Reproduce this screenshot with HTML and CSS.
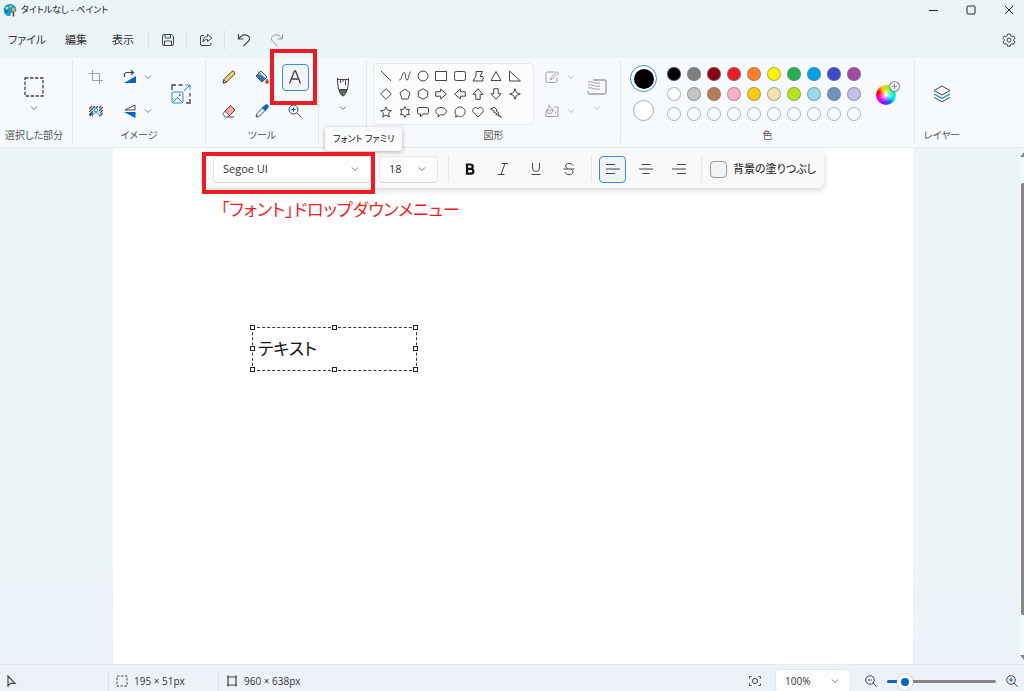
FILE: index.html
```html
<!DOCTYPE html>
<html lang="ja">
<head>
<meta charset="utf-8">
<title>タイトルなし - ペイント</title>
<link rel="stylesheet" href="styles.css">
</head>
<body>
<svg class="defs" aria-hidden="true">
  <symbol id="chev" viewBox="0 0 8 8"><path d="M1 2.500 4 5.500 7 2.500"/></symbol>
</svg>
<div class="app">
  <header class="titlebar">
    <svg class="logo" viewBox="0 0 14 14"><path d="M7 1C3 1 .5 4 .7 7.500 1 11 4 13.500 6.500 13c1.500-.4.8-2 1.500-3 1-1.200 5 0 5.300-3C13.500 3.500 10.500 1 7 1z" fill="#1b9bd8"/><circle cx="4" cy="5" r="1.300" fill="#ffd04a"/><circle cx="7.500" cy="3.500" r="1.200" fill="#8fe06a"/><circle cx="3.500" cy="8.500" r="1.200" fill="#0b5fa8"/><path d="M10.500 7v6.500" stroke="#5d4632" stroke-width="1.500"/><path d="M9 5h3v3.500H9z" fill="#f0a23c"/></svg>
    <span class="title">タイトルなし - ペイント</span>
    <button class="win" aria-label="最小化"><svg class="ic" viewBox="0 0 10 10"><path d="M1 5.500h9"/></svg></button>
    <button class="win" aria-label="最大化"><svg class="ic" viewBox="0 0 10 10"><rect x="1" y="1" width="8" height="8" rx=".8"/></svg></button>
    <button class="win" aria-label="閉じる"><svg class="ic" viewBox="0 0 10 10"><path d="m1 1 8 8M9 1 1 9"/></svg></button>
  </header>
  <nav class="menubar">
    <button class="menu file">ファイル</button>
    <button class="menu edit">編集</button>
    <button class="menu view">表示</button>
    <i class="sep"></i>
    <button class="quick" aria-label="保存"><svg class="ic" viewBox="0 0 14 14"><path d="M1.500 3A1.500 1.500 0 0 1 3 1.500h7.500l2 2V11A1.500 1.500 0 0 1 11 12.500H3A1.500 1.500 0 0 1 1.500 11zM4 1.500V5h5.500V1.500M3.500 12.500V8h7v4.500"/></svg></button>
    <i class="sep"></i>
    <button class="quick" aria-label="共有"><svg class="ic" viewBox="0 0 14 14"><path d="M5 2.500H3A1.500 1.500 0 0 0 1.500 4v7A1.500 1.500 0 0 0 3 12.500h7.500A1.500 1.500 0 0 0 12 11v-1M8.500 1.500 13 5 8.500 8.500v-2C6 6.500 5 7.500 4 9c0-3 1.500-5.300 4.500-5.500z"/></svg></button>
    <i class="sep"></i>
    <button class="quick" aria-label="元に戻す"><svg class="ic" viewBox="0 0 14 14"><path d="M1.500 1v5h5M1.700 6C4 2.500 7.500 1 10.500 2.500c2.500 1.300 2.500 4 1 5.700L6.500 13" stroke-width="1.200"/></svg></button>
    <button class="quick off" aria-label="やり直し"><svg class="ic" viewBox="0 0 14 14"><path d="M12.500 1v5h-5M12.300 6C10 2.500 6.500 1 3.500 2.500 1 3.800 1 6.500 2.500 8.200L7.500 13"/></svg></button>
    <button class="quick gear" aria-label="設定"><svg class="ic" viewBox="0 0 14 14"><path d="m5.700 1-.4 1.800-1.300.7L2.300 3 1 5.200 2.300 6.500v1.200L1 9l1.300 2.200 1.700-.5 1.300.7.4 1.800h2.600l.4-1.800 1.300-.7 1.700.5L13 9l-1.300-1.300V6.500L13 5.200 11.700 3l-1.700.5-1.300-.7L8.300 1z"/><circle cx="7" cy="7.100" r="2"/></svg></button>
  </nav>

  <section class="ribbon">
    <div class="group g-select">
      <div class="body stack">
        <button aria-label="選択"><svg class="ic i20" viewBox="0 0 20 20"><rect x="1" y="1" width="18" height="18" stroke-dasharray="3.500 1.500" stroke-width="1.300"/></svg></button>
        <svg class="chev"><use href="#chev"/></svg>
      </div>
      <h2>選択した部分</h2>
    </div>
    <div class="group g-image">
      <div class="body image-grid">
        <button class="off" aria-label="トリミング"><svg class="ic" viewBox="0 0 14 14"><path d="M3.500 0v10.500H14M0 3.500h10.500V14"/></svg></button>
        <button class="pair" aria-label="回転"><svg class="ic" viewBox="0 0 14 14"><path d="M13 6v7H1z" fill="#0b62c0" stroke="none"/><path d="M2 7C.5 5 1.500 2.500 4 2.500h6M8 .3l2.500 2.200L8 4.800" stroke-width="1.200"/></svg><svg class="chev"><use href="#chev"/></svg></button>
        <button class="big" aria-label="サイズ変更"><svg class="ic i20" viewBox="0 0 20 20"><path d="M1 6V1h4M7.500 1h4M19 9v3.500M19 15v4h-4" stroke-width="1.300"/><path d="m13 7 6-6M14.500 1H19v4.500" stroke="#2b7fd0"/><rect x="1" y="8" width="11" height="11" rx="1.500" stroke="#2b7fd0"/><path d="m2 18 4.500-4.500L11 18" stroke="#2b7fd0"/><circle cx="8.700" cy="11" r=".8" stroke="#2b7fd0"/></svg></button>
        <button aria-label="背景の削除"><svg class="ic" viewBox="0 0 14 14"><path d="m0 5 3-3M0 8l6-6M0 11l4-4M7 4l2-2M1 12l3-3M10 4l2-2M10 7l4-4M11 9l3-3M11 12l3-3" stroke-width="1.200"/><circle cx="7" cy="6" r="1.800" stroke="#2b7fd0"/><path d="M3.500 12.500c.3-5 6.700-5 7 0" stroke="#2b7fd0"/></svg></button>
        <button class="pair" aria-label="反転"><svg class="ic" viewBox="0 0 14 14"><path d="M12 1v5H2z"/><path d="M12.500 8v6L1 8z" fill="#0b62c0" stroke="none"/></svg><svg class="chev"><use href="#chev"/></svg></button>
      </div>
      <h2>イメージ</h2>
    </div>
    <div class="group g-tools">
      <div class="body tools-grid">
        <button aria-label="鉛筆"><svg class="ic" viewBox="0 0 14 14"><path d="m1 13 .8-3.500L10 1.300c1.500-1 3.500 1 2.700 2.700L4.500 12.200z" fill="#f6cf62"/><path d="m1 13 .8-3.300 2.500 2.500z" fill="#fff"/></svg></button>
        <button aria-label="塗りつぶし"><svg class="ic" viewBox="0 0 14 14"><path d="m1 6 5-5 6 6-5 5z" fill="#fff"/><path d="m1.500 6 2-2 7 4L7 11.500z" fill="#1677cc" stroke="none"/><path d="M3 1.500 8 6.500"/><path d="M12 9c-1 1.500-1.500 2.200-1.500 3a1.500 1.500 0 0 0 3 0c0-.8-.5-1.500-1.500-3z" fill="#d9471c" stroke="#a33616" stroke-width=".6"/></svg></button>
        <button class="selected" aria-label="テキスト"><svg class="ic" viewBox="0 0 14 14"><path d="m1.500 13.500 5-12.500h1l5 12.500M3.300 9h7.400" stroke-width="1.300"/></svg></button>
        <button aria-label="消しゴム"><svg class="ic" viewBox="0 0 14 14"><path d="M1 9.500 8.500 1.500 13 6l-7 7H3.500L1 10.500z" fill="#fff"/><path d="M3 7.300 8.500 1.500 13 6 7.500 11.700z" fill="#f8a9a9"/><path d="M6 13h6"/></svg></button>
        <button aria-label="色の選択"><svg class="ic" viewBox="0 0 14 14"><path d="M7.500 4 2 9.500 1 13l3.500-1L10 6.500z" fill="#eef6fc"/><path d="m6.500 3 1.500-.3L10.500.5c2-1 4 1 3 3L11.300 6l-.3 1.500z" fill="#0b62c0" stroke="none"/></svg></button>
        <button aria-label="拡大鏡"><svg class="ic" viewBox="0 0 14 14"><circle cx="5.500" cy="5.500" r="4.500"/><path d="m9 9 4.500 4.500"/><path d="M5.500 3.200v4.600M3.200 5.500h4.600" stroke="#0b62c0"/></svg></button>
      </div>
      <h2>ツール</h2>
    </div>
    <div class="group g-brush">
      <div class="body stack">
        <button aria-label="ブラシ"><svg class="ic i20" viewBox="0 0 20 20"><path d="M4.500 1v4l1 7.500h9l1-7.500V1M4.500 2.500h11M7.500 2.500V6M10 2.500v2.500M12.500 2.500V8"/><path d="M6 13h8l-1 3-2.500 3h-1L7 16z" fill="#666"/></svg></button>
        <svg class="chev"><use href="#chev"/></svg>
      </div>
    </div>
    <div class="group g-shapes">
      <div class="body shapes-row">
        <div class="gallery">
          <button aria-label="直線"><svg class="ic i12" viewBox="0 0 12 12"><path d="m1 1 10 10"/></svg></button>
          <button aria-label="曲線"><svg class="ic i12" viewBox="0 0 12 12"><path d="M.3 10C3 10 3 2.500 5 2.500S6 10 8 10s1.500-7.500 4-8.500"/></svg></button>
          <button aria-label="楕円"><svg class="ic i12" viewBox="0 0 12 12"><circle cx="6" cy="6" r="5"/></svg></button>
          <button aria-label="四角形"><svg class="ic i12" viewBox="0 0 12 12"><path d="M.5 1.500h11v9H.5z"/></svg></button>
          <button aria-label="角丸四角形"><svg class="ic i12" viewBox="0 0 12 12"><rect x=".5" y="1.500" width="11" height="9" rx="1.800"/></svg></button>
          <button aria-label="多角形"><svg class="ic i12" viewBox="0 0 12 12"><path d="M4 1.500h6.500L8 6.500h3V11H1L4 6z"/></svg></button>
          <button aria-label="三角形"><svg class="ic i12" viewBox="0 0 12 12"><path d="m6 1.500 5 9H1z"/></svg></button>
          <button aria-label="直角三角形"><svg class="ic i12" viewBox="0 0 12 12"><path d="M.5 1v10h11z"/></svg></button>
          <button aria-label="ひし形"><svg class="ic i12" viewBox="0 0 12 12"><path d="m6 .7 5.300 5.300L6 11.300.7 6z"/></svg></button>
          <button aria-label="五角形"><svg class="ic i12" viewBox="0 0 12 12"><path d="m6 1 5 3.800L9 11H3L1 4.800z"/></svg></button>
          <button aria-label="六角形"><svg class="ic i12" viewBox="0 0 12 12"><path d="m6 .8 4.700 2.500v5.400L6 11.200 1.300 8.700V3.300z"/></svg></button>
          <button aria-label="右矢印"><svg class="ic i12" viewBox="0 0 12 12"><path d="M.7 3.800h5V1l5.600 5-5.600 5V8.200h-5z"/></svg></button>
          <button aria-label="左矢印"><svg class="ic i12" viewBox="0 0 12 12"><path d="M11.300 3.800h-5V1L.7 6l5.600 5V8.200h5z"/></svg></button>
          <button aria-label="上矢印"><svg class="ic i12" viewBox="0 0 12 12"><path d="M3.800 11.300v-5H1L6 .7l5 5.600H8.200v5z"/></svg></button>
          <button aria-label="下矢印"><svg class="ic i12" viewBox="0 0 12 12"><path d="M3.800.7v5H1l5 5.600 5-5.600H8.200v-5z"/></svg></button>
          <button aria-label="四方星"><svg class="ic i12" viewBox="0 0 12 12"><path d="m6 .7 1.400 3.900L11.300 6 7.400 7.400 6 11.300 4.600 7.400.7 6l3.900-1.400z"/></svg></button>
          <button aria-label="五方星"><svg class="ic i12" viewBox="0 0 12 12"><path d="m6 .8 1.500 3.400 3.800.4-2.800 2.500.8 3.900L6 9l-3.300 2 .8-3.900L.7 4.600l3.800-.4z"/></svg></button>
          <button aria-label="六方星"><svg class="ic i12" viewBox="0 0 12 12"><path d="m6 .7 1.500 2.700h3.300L9.200 6l1.600 2.600H7.500L6 11.300 4.500 8.600H1.200L2.800 6 1.200 3.400h3.300z"/></svg></button>
          <button aria-label="角丸吹き出し"><svg class="ic i12" viewBox="0 0 12 12"><path d="M2 1.500h8A1.500 1.500 0 0 1 11.500 3v3.500A1.500 1.500 0 0 1 10 8H6l-2.500 3V8H2A1.500 1.500 0 0 1 .5 6.500V3A1.500 1.500 0 0 1 2 1.500z"/></svg></button>
          <button aria-label="楕円吹き出し"><svg class="ic i12" viewBox="0 0 12 12"><path d="M3 11 3.500 8.500C-1 7 0 1.500 6 1.500s7.500 6 2 7.300c-1 .2-2 .2-2.500 0z"/></svg></button>
          <button aria-label="円形吹き出し"><svg class="ic i12" viewBox="0 0 12 12"><path d="M1.500 11 2.200 9C-.5 5 2 1 6 1s6.500 4 4.500 7-4.500 3-6 2z"/></svg></button>
          <button aria-label="ハート"><svg class="ic i12" viewBox="0 0 12 12"><path d="M6 11 1.200 6C-.8 3.500 3.500-.8 6 3c2.500-3.800 6.800.5 4.800 3z"/></svg></button>
          <button aria-label="稲妻"><svg class="ic i12" viewBox="0 0 12 12"><path d="m.7 3 3.500-2L7 4.200l-1 .5L8.800 7l-1 .5 3.500 3.800-5.500-3 1-.7L3.500 6l1-.7z"/></svg></button>
        </div>
        <div class="shape-opts">
          <button class="pair off" aria-label="枠線"><svg class="ic" viewBox="0 0 14 14"><path d="M10 2H2.500A1.500 1.500 0 0 0 1 3.500V11A1.500 1.500 0 0 0 2.500 12.500h8L12 11V8M5.500 10l.7-2.500L12 1.500l1.500 1.500-6 6z"/></svg><svg class="chev"><use href="#chev"/></svg></button>
          <button class="pair off" aria-label="塗りつぶし"><svg class="ic" viewBox="0 0 14 14"><path d="M9 3h4v9.500H1V7M1.500 6 5 2.500 8.500 6 6 9.500H3.500zM4 .5v3M1.500 6h7M10.500 7.500v2"/></svg><svg class="chev"><use href="#chev"/></svg></button>
        </div>
        <div class="stack">
          <button class="off" aria-label="サイズ"><svg class="ic i20" viewBox="0 0 20 20"><path d="M6 3h11.500A1.500 1.500 0 0 1 19 4.500v11a1.500 1.500 0 0 1-1.500 1.500h-15A1.500 1.500 0 0 1 1 15.500V14" stroke-width="1.300"/><path d="M1 5c4-1 6 2 12 1M1 8c4-1 6 2 12 1M1 11c4-1 6 2 12 1"/></svg></button>
          <svg class="chev off"><use href="#chev"/></svg>
        </div>
      </div>
      <h2>図形</h2>
    </div>
    <div class="group g-colors">
      <div class="body colors-row">
        <div class="current">
          <button class="color-one" aria-label="色 1"><i></i></button>
          <button class="color-two" aria-label="色 2"></button>
        </div>
        <div class="palette">
          <button style="background:#000"></button><button style="background:#7f7f7f"></button><button style="background:#880015"></button><button style="background:#ed1c24"></button><button style="background:#ff7f27"></button><button style="background:#fff200"></button><button style="background:#22b14c"></button><button style="background:#00a2e8"></button><button style="background:#3f48cc"></button><button style="background:#a349a4"></button>
          <button style="background:#fff"></button><button style="background:#c3c3c3"></button><button style="background:#b97a57"></button><button style="background:#ffaec9"></button><button style="background:#ffc90e"></button><button style="background:#efe4b0"></button><button style="background:#b5e61d"></button><button style="background:#99d9ea"></button><button style="background:#7092be"></button><button style="background:#c8bfe7"></button>
          <button></button><button></button><button></button><button></button><button></button><button></button><button></button><button></button><button></button><button></button>
        </div>
        <button class="wheel" aria-label="色の編集"><svg class="ic plus" viewBox="0 0 10 10"><circle cx="5" cy="5" r="4.500" fill="#f7fafd"/><path d="M5 2.500v5M2.500 5h5"/></svg></button>
      </div>
      <h2>色</h2>
    </div>
    <div class="group g-layers">
      <div class="body layers">
        <button aria-label="レイヤー"><svg class="ic i20" viewBox="0 0 20 20"><path d="m10 2 8 4.500-8 4.500-8-4.500z"/><path d="m2 10 8 4.300L18 10" stroke="#2b7fd0" stroke-width="1.300"/><path d="m2 13.300 8 4.500 8-4.500"/></svg></button>
      </div>
      <h2>レイヤー</h2>
    </div>
  </section>

  <main class="workspace">
    <div class="canvas">
      <div class="textbox">テキスト
        <i class="h nw"></i><i class="h n"></i><i class="h ne"></i><i class="h w"></i><i class="h e"></i><i class="h sw"></i><i class="h s"></i><i class="h se"></i>
      </div>
      <p class="callout">「フォント」ドロップダウンメニュー</p>
    </div>
    <div class="scroll"><i class="up"></i><i class="thumb"></i><i class="down"></i></div>
    <div class="textbar">
      <span class="pick family"><select aria-label="フォント ファミリ"><option>Segoe UI</option></select><svg class="chev"><use href="#chev"/></svg></span>
      <span class="pick size"><select aria-label="フォント サイズ"><option>18</option></select><svg class="chev"><use href="#chev"/></svg></span>
      <i class="sep"></i>
      <div class="styles">
        <button aria-label="太字"><svg class="ic" viewBox="0 0 14 14"><path d="M4 2.500h3.500a2.200 2.200 0 0 1 0 4.400H4zM4 6.900h4a2.400 2.400 0 0 1 0 4.800H4z" stroke="#111" stroke-width="2.200"/></svg></button>
        <button aria-label="斜体"><svg class="ic" viewBox="0 0 14 14"><path d="M5.500 1.500H12M2 12.500h6.500M9 1.500l-4 11"/></svg></button>
        <button aria-label="下線"><svg class="ic" viewBox="0 0 14 14"><path d="M3.500 1v5a3.500 3.500 0 0 0 7 0V1M2.500 12.500h9"/></svg></button>
        <button aria-label="取り消し線"><svg class="ic" viewBox="0 0 14 14"><path d="M11 3.500C10 .8 3.500.8 3.500 4c0 1.500 1.500 2.200 3 3M1.500 7h11M9.500 7.500c3 2 1.500 5.200-2.500 5.200-2 0-3.500-1-4-2.500"/></svg></button>
      </div>
      <i class="sep"></i>
      <div class="styles">
        <button class="selected" aria-label="左揃え"><svg class="ic" viewBox="0 0 14 14"><path d="M0 2.500h9M0 7h14M0 11.500h9"/></svg></button>
        <button aria-label="中央揃え"><svg class="ic" viewBox="0 0 14 14"><path d="M2.500 2.500h9M0 7h14M3.500 11.500h7"/></svg></button>
        <button aria-label="右揃え"><svg class="ic" viewBox="0 0 14 14"><path d="M5 2.500h9M0 7h14M5 11.500h9"/></svg></button>
      </div>
      <i class="sep"></i>
      <label class="fill"><input type="checkbox">背景の塗りつぶし</label>
    </div>
  </main>

  <footer class="status">
    <span class="cell pointer"><svg class="ic i12" viewBox="0 0 12 12"><path d="M3 1v10l2.500-2.700H10z" stroke-width="1.200"/></svg></span>
    <span class="cell sel"><svg class="ic i12" viewBox="0 0 12 12"><rect x="1" y="1" width="10" height="10" stroke-dasharray="2.500 1.500"/></svg>195 × 51px</span>
    <span class="cell"><svg class="ic i12" viewBox="0 0 12 12"><path d="M2 .5v11M10 .5v11M1 2h10M1 10h10" stroke-width="1.200"/></svg>960 × 638px</span>
    <button class="fit" aria-label="ウィンドウに合わせる"><svg class="ic i12" viewBox="0 0 12 12"><path d="M.5 3.500v-2h2M9.500 1.500h2v2M11.500 8.500v2h-2M2.500 10.500h-2v-2"/><circle cx="6" cy="6" r="2.500"/></svg></button>
    <span class="pick zoom"><select aria-label="ズーム"><option>100%</option></select><svg class="chev"><use href="#chev"/></svg></span>
    <button aria-label="縮小"><svg class="ic i12" viewBox="0 0 12 12"><circle cx="5" cy="5" r="4.300"/><path d="m8 8 3.700 3.700"/><path d="M3 5h4" stroke="#0b62c0"/></svg></button>
    <input class="slider" type="range" min="0" max="100" value="11" aria-label="ズーム倍率">
    <button aria-label="拡大"><svg class="ic i12" viewBox="0 0 12 12"><circle cx="5" cy="5" r="4.300"/><path d="m8 8 3.700 3.700"/><path d="M3 5h4M5 3v4" stroke="#0b62c0"/></svg></button>
  </footer>

  <div class="tooltip" role="tooltip">フォント ファミリ</div>
  <div class="mark mark-tool"></div>
  <div class="mark mark-font"></div>
</div>
</body>
</html>
```
FILE: styles.css
```css
* { box-sizing: border-box; }
body {
  margin: 0;
  font: 10px/14px "Open Sans", "Noto Sans CJK JP", sans-serif;
  font-feature-settings: "palt";
  color: #333;
}
button {
  display: flex; align-items: center; justify-content: center;
  margin: 0; padding: 0; border: 0; background: none;
  font: inherit; color: inherit;
}
h2 { margin: 0; font: inherit; text-align: center; color: #555; }
.defs { position: absolute; width: 0; height: 0; }
.ic { width: 14px; height: 14px; fill: none; stroke: #444; stroke-width: 1; flex: none; }
.i20 { width: 20px; height: 20px; }
.i12 { width: 12px; height: 12px; }
.chev { width: 8px; height: 8px; fill: none; stroke: #777; flex: none; }
.off { opacity: .5; }
.sep { width: 1px; background: #dfe5ea; }

.app {
  position: relative; display: flex; flex-direction: column;
  height: 100vh; overflow: hidden; background: #ebf4f7;
}

.titlebar { display: flex; align-items: center; gap: 8px; height: 20px; padding-left: 3px; }
.logo { width: 14px; height: 14px; }
.title { flex: 1; margin-left: -4px; font-size: 9px; color: #111; }
.win { width: 30px; height: 20px; }
.win .ic { width: 10px; height: 10px; stroke: #222; }

.menubar { display: flex; align-items: center; height: 38px; padding: 2px 0 0 8px; font-size: 11px; }
.file { margin-right: 19px; }
.edit { margin-right: 25px; }
.view { margin-right: 14px; }
.menubar .sep { height: 20px; }
.quick { width: 37px; height: 30px; }
.quick.off { margin-left: -4px; }
.gear { width: 30px; margin-left: auto; }

.ribbon {
  display: flex; height: 90px; padding: 2px 0 4px;
  background: #f7fafd; border-bottom: 1px solid #e6ebef;
}
.group { border-right: 1px solid #e3e8ec; }
.group:last-child { border: 0; }
.body { height: 68px; }
.stack { display: flex; flex-direction: column; align-items: center; gap: 7px; padding-top: 17px; }
.g-select { width: 73px; padding-right: 4px; }
.g-image { width: 133px; }
.image-grid {
  display: grid; grid-template: 34px 34px / 28px 42px 39px;
  padding-left: 9px; align-items: center;
}
.image-grid .big { grid-area: 1 / 3 / 3 / 4; justify-content: flex-end; }
.pair { justify-content: flex-end; gap: 7px; }
.g-tools { width: 113px; }
.tools-grid {
  display: grid; grid-template: 34px 34px / 33px 33px 33px;
  justify-content: center; align-items: center; justify-items: center;
}
.selected { width: 27px; height: 27px; border: 1px solid #3f8ad0; border-radius: 4px; background: #f1f4f8; }
.g-brush { width: 48px; }
.g-shapes { width: 254px; }
.shapes-row { display: flex; padding-left: 6px; }
.gallery {
  display: grid; grid-template: repeat(3, 18px) / repeat(8, 1fr);
  width: 161px; height: 62px; margin-top: 3px; padding: 3px 9px 3px 3px;
  border: 1px solid #e4e9ed; border-radius: 5px; background: #fafcfe;
}
.shape-opts { display: grid; grid-template-rows: 34px 34px; width: 41px; align-items: center; }
.shape-opts .pair { gap: 8px; }
.shapes-row .stack { margin-left: 12px; }
.g-colors { width: 294px; }
.colors-row { display: flex; align-items: center; padding-left: 9px; }
.current { display: flex; flex-direction: column; align-items: center; gap: 8px; width: 27px; margin-top: -2px; }
.current button { border-radius: 50%; }
.color-one { width: 27px; height: 27px; border: 1px solid #3f8ad0; background: #fff; }
.color-one i { width: 20px; height: 20px; border-radius: 50%; background: #000; }
.color-two { width: 21px; height: 21px; border: 1px solid #aaa; background: #fff; }
.palette { display: grid; grid-template-columns: repeat(10, 14px); gap: 6px; margin-left: 10px; }
.palette button { height: 14px; border: 1px solid rgba(110, 120, 130, .55); border-radius: 50%; }
.wheel {
  position: relative; width: 20px; height: 20px; margin: 2px 0 0 15px; border-radius: 50%;
  background: radial-gradient(#fff, transparent 50%), conic-gradient(from 20deg, #7f0, #0f8, #0ef, #06f, #a0f, #f0c, #f00, #fc0, #7f0);
}
.plus { position: absolute; top: -4px; right: -4px; width: 11px; height: 11px; stroke: #888; }
.g-layers { width: 54px; }
.layers { display: flex; align-items: center; justify-content: center; }

.workspace {
  position: relative; display: flex; flex: 1; min-height: 0;
  padding-left: 113px; background: linear-gradient(#ebf4f7 80%, #edf2fa);
}
.canvas { position: relative; flex: 1; background: #fff; }
.scroll { display: flex; flex-direction: column; width: 4px; margin-left: 107px; background: #f3f8fa; }
.scroll .up, .scroll .down { width: 4px; height: 5px; background: #888; clip-path: polygon(100% 0, 100% 100%, 0 100%); }
.scroll .up { margin-top: 4px; }
.scroll .down { margin-top: auto; margin-bottom: 4px; clip-path: polygon(0 0, 100% 0, 100% 100%); }
.thumb { width: 3px; height: 432px; margin: 26px 0 0 1px; border-radius: 2px 0 0 2px; background: #868686; }

.textbar {
  position: absolute; left: 203px; top: 2px; display: flex; align-items: center;
  height: 38px; padding: 0 8px 0 10px; border-radius: 6px; background: #f9f9f9;
  box-shadow: 0 2px 6px rgba(0, 0, 0, .18); font-size: 11px;
}
.textbar .sep { height: 26px; background: #e8e8e8; }
.pick { position: relative; display: flex; align-items: center; }
.pick select {
  appearance: none; width: 100%; height: 27px; margin: 0; padding: 0 9px;
  border: 1px solid #e6e6e6; border-bottom-color: #d4d4d4; border-radius: 4px;
  background: #fdfdfd; font: inherit; color: #333;
}
.pick .chev { position: absolute; right: 12px; pointer-events: none; }
.family { width: 158px; }
.size { width: 59px; margin: 0 10px 0 8px; }
.styles { display: flex; align-items: center; gap: 6px; margin: 0 9px 0 7px; }
.styles button { width: 27px; height: 27px; }
.fill { display: flex; align-items: center; gap: 6px; margin-left: 8px; color: #111; }
.fill input { appearance: none; width: 17px; height: 17px; margin: 0; border: 1px solid #999; border-radius: 4px; background: #f3f3f3; }

.textbox {
  position: absolute; left: 139px; top: 179px; width: 165px; height: 44px; padding-left: 5px;
  border: 1px dashed #333; font-size: 17px; line-height: 42px; color: #111;
}
.h { position: absolute; width: 5px; height: 5px; margin: -3px; border: 1px solid #222; background: #fff; }
.n, .s { left: 50%; }
.w, .e { top: 50%; }
.nw, .n, .ne { top: 0; }
.sw, .s, .se { top: 100%; }
.nw, .w, .sw { left: 0; }
.ne, .e, .se { left: 100%; }

.callout {
  position: absolute; left: 108px; top: 48px; margin: 0;
  font-size: 17px; line-height: 28px; color: #ed1c24; white-space: nowrap;
}

.status {
  display: flex; align-items: center; height: 27px; padding: 6px 6px 0 5px;
  border-top: 1px solid #e3e8ed; background: #edf2f8; line-height: 20px; white-space: nowrap;
}
.cell { display: flex; align-items: center; gap: 6px; width: 110px; padding-left: 7px; border-left: 1px solid #dfe4ea; }
.cell.pointer { width: 103px; padding-left: 0; border: 0; }
.fit { margin-left: auto; }
.zoom { width: 76px; margin: 0 14px; }
.zoom select { height: 24px; border-color: #e3e8ec; }
.slider { appearance: none; width: 109px; height: 16px; margin: 0 10px; background: none; }
.slider::-webkit-slider-runnable-track { height: 3px; border-radius: 2px; background: linear-gradient(90deg, #0067c0 16%, #868686 16%); }
.slider::-webkit-slider-thumb {
  appearance: none; width: 16px; height: 16px; margin-top: -6px; border: 4px solid #fff; border-radius: 50%;
  background: #0067c0; box-shadow: 0 0 1px #888;
}

.tooltip {
  position: absolute; left: 325px; top: 127px; padding: 5px 8px; border-radius: 3px;
  background: #f9fbfc; box-shadow: 0 1px 4px rgba(0, 0, 0, .3); font-size: 9px; color: #111; white-space: nowrap;
}
.mark { position: absolute; border: 4px solid #ed1c24; pointer-events: none; }
.mark-tool { left: 270px; top: 49px; width: 47px; height: 56px; }
.mark-font { left: 202px; top: 152px; width: 173px; height: 42px; }
```
